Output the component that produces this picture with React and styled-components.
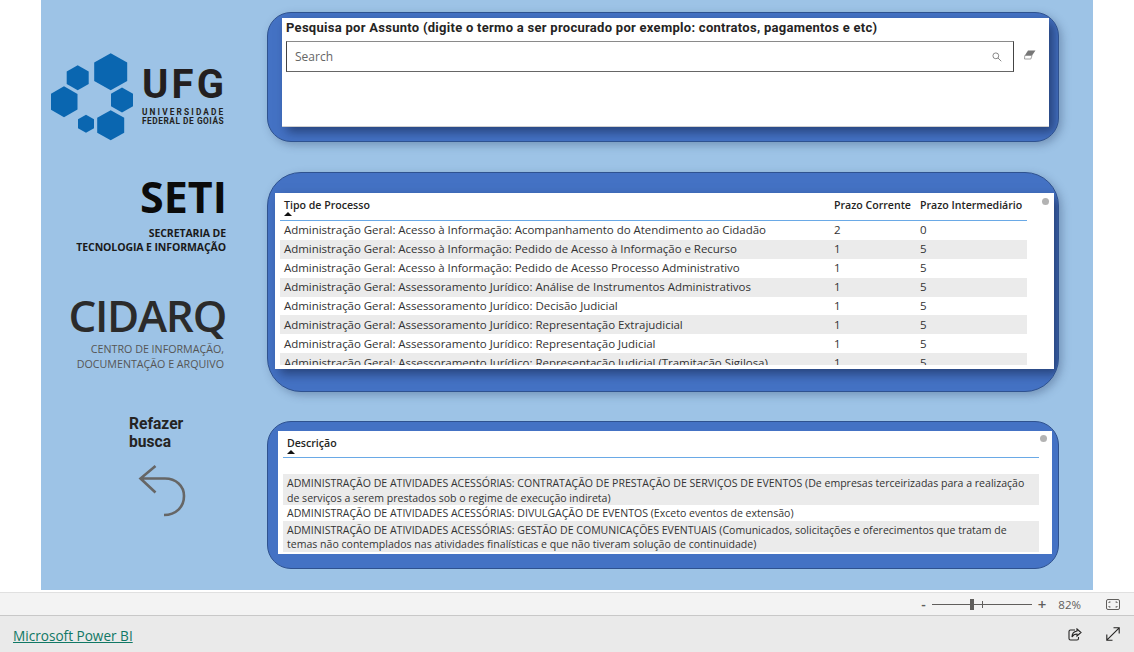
import styled, { createGlobalStyle } from "styled-components";

const GlobalStyle = createGlobalStyle`
  html, body {
    margin: 0;
    padding: 0;
    background: #ffffff;
    font-family: "Open Sans", sans-serif;
  }
`;

const Page = styled.div`
  width: 1134px;
  height: 652px;
  display: flex;
  flex-direction: column;
  overflow: hidden;
`;

const Stage = styled.div`
  display: flex;
  height: 590px;
  width: 1052px;
  margin-left: 41px;
  background: #9dc3e6;
`;

const Side = styled.div`
  width: 226px;
  display: flex;
  flex-direction: column;
`;

const UfgLogo = styled.div`
  display: flex;
  margin: 53px 0 0 10px;
  height: 88px;
`;

const UfgText = styled.div`
  margin: 15px 0 0 7px;
  width: 84px;
  color: #231f20;
  font-family: Roboto, sans-serif;
  font-weight: 700;
`;

const UfgName = styled.div`
  font-size: 40px;
  line-height: 34px;
  letter-spacing: 3.2px;
`;

const UfgSub = styled.div`
  font-size: 8.3px;
  line-height: 9px;
  white-space: nowrap;
  letter-spacing: ${(p) => p.$spacing};
  margin-top: ${(p) => p.$top || "0"};
`;

const RightLogo = styled.div`
  width: ${(p) => p.$width || "186px"};
  text-align: right;
  white-space: nowrap;
  color: ${(p) => p.$color};
  font-size: ${(p) => p.$size};
  font-weight: ${(p) => p.$weight};
  line-height: ${(p) => p.$line};
  letter-spacing: ${(p) => p.$spacing || "0"};
  margin-top: ${(p) => p.$top};
`;

const Redo = styled.div`
  margin: 43px 0 0 88px;
  width: 70px;
  font-family: Roboto, sans-serif;
  font-size: 15.6px;
  font-weight: 700;
  line-height: 18px;
  color: #252423;
`;

const RedoIcon = styled.svg`
  display: block;
  margin: 13px 0 0 97px;
`;

const Panels = styled.div`
  width: 792px;
  padding-top: 12px;
  display: flex;
  flex-direction: column;
`;

const Panel = styled.section`
  box-sizing: border-box;
  height: ${(p) => p.$height};
  margin-top: ${(p) => p.$top || "0"};
  padding: ${(p) => p.$pad};
  border-radius: ${(p) => p.$radius};
  background: #4472c4;
  border: 1px solid #2f528f;
  box-shadow: ${(p) => (p.$raised ? "3px 3px 8px rgba(40, 60, 100, 0.35)" : "none")};
  overflow: hidden;
`;

const Visual = styled.div`
  position: relative;
  height: 100%;
  background: #ffffff;
  box-shadow: 5px 5px 10px rgba(10, 20, 50, 0.5);
`;

const SearchVisual = styled(Visual)`
  padding: 0 0 0 4px;
  border-bottom: 1px solid #d0d0d0;
  box-sizing: border-box;
`;

const SearchTitle = styled.div`
  font-family: Roboto, sans-serif;
  font-size: 13px;
  font-weight: 700;
  letter-spacing: 0.28px;
  line-height: 20px;
  color: #252423;
  white-space: nowrap;
`;

const SearchRow = styled.div`
  display: flex;
  align-items: center;
  margin-top: 3px;
`;

const SearchBox = styled.div`
  box-sizing: border-box;
  width: 728px;
  height: 31px;
  display: flex;
  align-items: center;
  justify-content: space-between;
  padding: 0 11px 0 8px;
  border: 1px solid #8a8a8a;
  border-left-color: #444444;
  border-right-color: #444444;
  border-bottom-color: #666666;
  font-size: 12px;
  color: #666666;
`;

const EraserIcon = styled.svg`
  display: block;
  margin: -3px 0 0 10px;
`;

const Table = styled.div`
  position: absolute;
  left: 5px;
  top: 0;
  bottom: 4px;
  width: 747px;
  overflow: hidden;
`;

const Columns = styled.div`
  display: grid;
  grid-template-columns: 550px 86px 111px;
  align-items: center;
`;

const HeadRow = styled(Columns)`
  height: 27px;
  align-items: start;
  border-bottom: 1px solid #6aa9e6;
`;

const HeadCell = styled.div`
  position: relative;
  padding-left: 4px;
  font-size: 10.6px;
  font-weight: 600;
  line-height: 24px;
  color: #252423;
  white-space: nowrap;
`;

const SortMark = styled.span`
  position: absolute;
  left: 4px;
  bottom: ${(p) => p.$bottom};
  width: 0;
  height: 0;
  border-left: 4px solid transparent;
  border-right: 4px solid transparent;
  border-bottom: 4px solid #111111;
`;

const Row = styled(Columns)`
  height: 18.9px;
  background: ${(p) => (p.$shaded ? "#ebebeb" : "#ffffff")};
`;

const Cell = styled.div`
  padding-left: 4px;
  font-size: 11.5px;
  letter-spacing: -0.035px;
  line-height: 18px;
  color: #333333;
  white-space: nowrap;
`;

const ScrollDot = styled.span`
  position: absolute;
  top: ${(p) => p.$top};
  right: ${(p) => p.$right};
  width: 7px;
  height: 7px;
  border-radius: 50%;
  background: #b3b3b3;
`;

const DescVisual = styled.div`
  position: relative;
  height: 100%;
  background: #ffffff;
  padding: 0 13px 0 5px;
`;

const DescHead = styled.div`
  position: relative;
  height: 27px;
  box-sizing: border-box;
  padding-left: 4px;
  border-bottom: 1px solid #6aa9e6;
  font-size: 10.6px;
  font-weight: 600;
  line-height: 24px;
  color: #252423;
`;

const DescList = styled.div`
  margin-top: 16px;
`;

const DescRow = styled.div`
  padding: ${(p) => p.$pad};
  font-size: 10.55px;
  line-height: 14.5px;
  color: #333333;
  background: ${(p) => (p.$shaded ? "#ebebeb" : "#ffffff")};
`;

const ZoomBar = styled.div`
  box-sizing: border-box;
  margin-top: 2px;
  height: 24px;
  display: flex;
  align-items: center;
  justify-content: flex-end;
  padding-right: 14px;
  background: #f3f3f3;
  border-top: 1px solid #e0e0e0;
  border-bottom: 1px solid #c8c8c8;
  color: #605e5c;
`;

const ZoomSign = styled.span`
  font-size: ${(p) => p.$size};
  font-weight: 600;
  line-height: 20px;
`;

const Slider = styled.div`
  position: relative;
  width: 100px;
  height: 1px;
  margin: 0 6px;
  background: #605e5c;
`;

const SliderThumb = styled.span`
  position: absolute;
  left: 38px;
  top: -5px;
  width: 4px;
  height: 11px;
  background: #605e5c;
`;

const SliderTick = styled.span`
  position: absolute;
  left: 50px;
  top: -3px;
  width: 1px;
  height: 7px;
  background: #605e5c;
`;

const ZoomValue = styled.span`
  margin: 0 25px 0 12px;
  font-size: 11.5px;
`;

const Footer = styled.footer`
  flex: 1;
  display: flex;
  align-items: center;
  justify-content: space-between;
  padding: 3px 14px 0 13px;
  background: #eaeaea;
`;

const PowerBiLink = styled.a`
  font-size: 13.6px;
  color: #117865;
  text-decoration: underline;
`;

const FooterIcons = styled.div`
  display: flex;
  align-items: center;
  gap: 24px;
  margin-top: -3px;
`;

const processRows = [
  ["Administração Geral: Acesso à Informação: Acompanhamento do Atendimento ao Cidadão", 2, 0],
  ["Administração Geral: Acesso à Informação: Pedido de Acesso à Informação e Recurso", 1, 5],
  ["Administração Geral: Acesso à Informação: Pedido de Acesso Processo Administrativo", 1, 5],
  ["Administração Geral: Assessoramento Jurídico: Análise de Instrumentos Administrativos", 1, 5],
  ["Administração Geral: Assessoramento Jurídico: Decisão Judicial", 1, 5],
  ["Administração Geral: Assessoramento Jurídico: Representação Extrajudicial", 1, 5],
  ["Administração Geral: Assessoramento Jurídico: Representação Judicial", 1, 5],
  ["Administração Geral: Assessoramento Jurídico: Representação Judicial (Tramitação Sigilosa)", 1, 5],
];

const hexagons = [
  [59.7, 18.7, 16.5, 18.5],
  [26.7, 24.7, 11, 12.5],
  [13, 48.7, 13.5, 15.5],
  [71, 47, 11, 12.5],
  [35, 70.7, 8, 9],
  [59.7, 72.3, 13.5, 15],
];

const hexPoints = ([cx, cy, rx, ry]) =>
  [
    [cx, cy - ry],
    [cx + rx, cy - ry / 2],
    [cx + rx, cy + ry / 2],
    [cx, cy + ry],
    [cx - rx, cy + ry / 2],
    [cx - rx, cy - ry / 2],
  ]
    .map((pt) => pt.join(","))
    .join(" ");

export default function App() {
  return (
    <Page>
      <GlobalStyle />
      <Stage>
        <Side>
          <UfgLogo>
            <svg width="84" height="88" viewBox="0 0 84 88">
              {hexagons.map((h) => (
                <polygon key={h.join()} points={hexPoints(h)} fill="#0a66b0" />
              ))}
            </svg>
            <UfgText>
              <UfgName>UFG</UfgName>
              <UfgSub $top="6px" $spacing="2.15px">UNIVERSIDADE</UfgSub>
              <UfgSub $spacing="0.55px">FEDERAL DE GOIÁS</UfgSub>
            </UfgText>
          </UfgLogo>
          <RightLogo $top="36px" $size="43px" $weight="700" $line="40px" $color="#0b0b0b">
            SETI
          </RightLogo>
          <RightLogo $width="185px" $top="9px" $size="10.5px" $weight="700" $line="14px" $color="#1a1a1a" $spacing="-0.1px">
            SECRETARIA DE
            <br />
            TECNOLOGIA E INFORMAÇÃO
          </RightLogo>
          <RightLogo $width="185px" $top="43px" $size="44px" $weight="600" $line="36px" $color="#2b2b2b" $spacing="-1.3px">
            CIDARQ
          </RightLogo>
          <RightLogo $width="183px" $top="8.5px" $size="10.7px" $weight="400" $line="15px" $color="#555555">
            CENTRO DE INFORMAÇÃO,
            <br />
            DOCUMENTAÇÃO E ARQUIVO
          </RightLogo>
          <Redo>
            Refazer
            <br />
            busca
          </Redo>
          <RedoIcon width="50" height="54" viewBox="0 0 50 54" fill="none" stroke="#666666" strokeWidth="2.6">
            <path d="M17.5 2 L2.5 14.5 L17.5 28.5 M2.5 14.5 H27 C38 14.5 46 22 46 32 C46 43 38 51 26 51" />
          </RedoIcon>
        </Side>
        <Panels>
          <Panel $height="130px" $pad="5px 9px 14px 14px" $radius="24px" $raised>
            <SearchVisual>
              <SearchTitle>
                Pesquisa por Assunto (digite o termo a ser procurado por exemplo: contratos, pagamentos e etc)
              </SearchTitle>
              <SearchRow>
                <SearchBox>
                  Search
                  <svg width="10" height="10" viewBox="0 0 11 11" fill="none" stroke="#888888" strokeWidth="1.1">
                    <circle cx="4.2" cy="4.2" r="3.2" />
                    <path d="M6.6 6.6 L10.2 10.2" />
                  </svg>
                </SearchBox>
                <EraserIcon width="12" height="10" viewBox="0 0 12 10">
                  <path d="M4 0.5 H11.5 L8 5.5 H0.8 Z" fill="#777777" />
                  <path d="M0.8 5.5 H8 L6.8 9 H0.5 Z" fill="#ffffff" stroke="#8a8a8a" strokeWidth="0.8" />
                </EraserIcon>
              </SearchRow>
            </SearchVisual>
          </Panel>

          <Panel $top="30px" $height="220px" $pad="20px 4px 22px 7px" $radius="34px" $raised>
            <Visual>
              <Table>
                <HeadRow>
                  <HeadCell>
                    Tipo de Processo
                    <SortMark $bottom="1px" />
                  </HeadCell>
                  <HeadCell>Prazo Corrente</HeadCell>
                  <HeadCell>Prazo Intermediário</HeadCell>
                </HeadRow>
                {processRows.map(([name, current, middle], i) => (
                  <Row key={name} $shaded={i % 2 === 1}>
                    <Cell>{name}</Cell>
                    <Cell>{current}</Cell>
                    <Cell>{middle}</Cell>
                  </Row>
                ))}
              </Table>
              <ScrollDot $top="5px" $right="5px" />
            </Visual>
          </Panel>

          <Panel $top="29px" $height="148px" $pad="9px 6px 14px 10px" $radius="24px">
            <DescVisual>
              <DescHead>
                Descrição
                <SortMark $bottom="3px" />
              </DescHead>
              <DescList>
                <DescRow $shaded $pad="2px 4px 0">
                  ADMINISTRAÇÃO DE ATIVIDADES ACESSÓRIAS: CONTRATAÇÃO DE PRESTAÇÃO DE SERVIÇOS DE EVENTOS (De empresas
                  terceirizadas para a realização de serviços a serem prestados sob o regime de execução indireta)
                </DescRow>
                <DescRow $pad="1px 4px 0">
                  ADMINISTRAÇÃO DE ATIVIDADES ACESSÓRIAS: DIVULGAÇÃO DE EVENTOS (Exceto eventos de extensão)
                </DescRow>
                <DescRow $shaded $pad="2px 4px 0">
                  ADMINISTRAÇÃO DE ATIVIDADES ACESSÓRIAS: GESTÃO DE COMUNICAÇÕES EVENTUAIS (Comunicados, solicitações e
                  oferecimentos que tratam de temas não contemplados nas atividades finalísticas e que não tiveram
                  solução de continuidade)
                </DescRow>
              </DescList>
              <ScrollDot $top="4px" $right="5px" />
            </DescVisual>
          </Panel>
        </Panels>
      </Stage>

      <ZoomBar>
        <ZoomSign $size="14px">-</ZoomSign>
        <Slider>
          <SliderThumb />
          <SliderTick />
        </Slider>
        <ZoomSign $size="15px">+</ZoomSign>
        <ZoomValue>82%</ZoomValue>
        <svg width="14" height="11" viewBox="0 0 14 11" fill="none" stroke="#605e5c" strokeWidth="1">
          <rect x="0.5" y="0.5" width="13" height="10" rx="1.5" />
          <path d="M3 4 V3 H4.5 M9.5 3 H11 V4 M11 7 V8 H9.5 M4.5 8 H3 V7" />
        </svg>
      </ZoomBar>

      <Footer>
        <PowerBiLink href="#">Microsoft Power BI</PowerBiLink>
        <FooterIcons>
          <svg width="14" height="13" viewBox="0 0 14 13" fill="none" stroke="#252423" strokeWidth="1.1">
            <path d="M7 2 H2.5 A1.5 1.5 0 0 0 1 3.5 V10.5 A1.5 1.5 0 0 0 2.5 12 H9 A1.5 1.5 0 0 0 10.5 10.5 V9" />
            <path d="M9 1 L13 4.5 L9 8 V6 C6.5 6 5 7 4 9 C4 6 6 3.5 9 3 Z" />
          </svg>
          <svg width="14" height="14" viewBox="0 0 14 14" fill="none" stroke="#252423" strokeWidth="1.1">
            <path d="M0.8 13.2 L13.2 0.8 M7.5 0.8 H13.2 V6.5 M0.8 7.5 V13.2 H6.5" />
          </svg>
        </FooterIcons>
      </Footer>
    </Page>
  );
}
